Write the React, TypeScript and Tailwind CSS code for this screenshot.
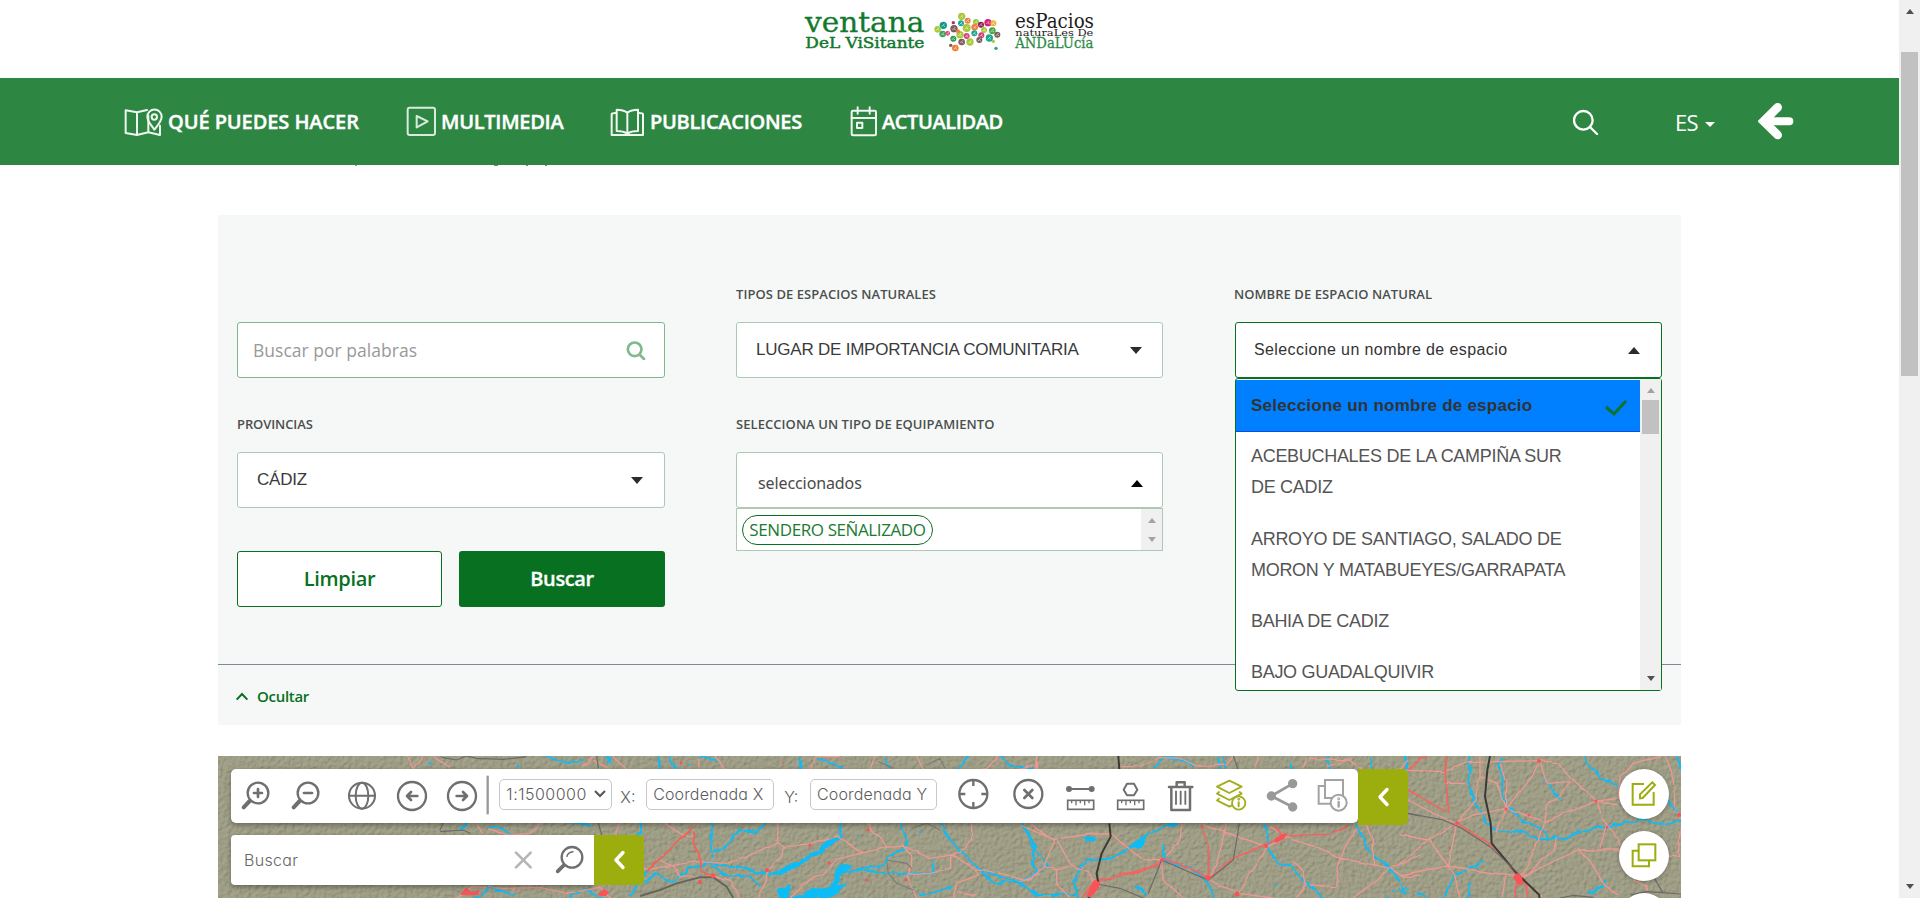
import React from "react";

const river = "#0fbcf5";

function Logo() {
  const dots: [number, number, number, string][] = [
    [545, 49, 11, "#a8c83c"], [490, 76, 11, "#0f9a86"], [473, 88, 10, "#a8c83c"], [520, 68, 5, "#b0306a"],
    [543, 70, 9, "#1aa58c"], [563, 62, 9, "#f08040"], [588, 66, 9, "#9ac43c"], [522, 86, 11, "#7a5c58"],
    [488, 102, 10, "#3aa55a"], [503, 100, 7, "#d83a6a"], [560, 84, 12, "#a8c83c"], [584, 82, 10, "#ef7d3c"],
    [603, 74, 9, "#8a2050"], [624, 68, 11, "#d8207a"], [640, 70, 9, "#f0b040"], [612, 90, 9, "#a8c83c"],
    [637, 92, 10, "#4aa84a"], [652, 104, 9, "#7a6058"], [628, 114, 11, "#18a890"], [604, 106, 9, "#d83a7a"],
    [583, 100, 9, "#18a890"], [540, 104, 11, "#a8c83c"], [560, 108, 9, "#d84080"], [520, 116, 9, "#2c9a50"],
    [545, 126, 10, "#7a5c58"], [570, 126, 11, "#a8c83c"], [598, 120, 9, "#7a5c58"], [526, 144, 10, "#f08030"],
    [512, 136, 5, "#7a5c58"], [640, 124, 5, "#a8c83c"], [648, 145, 5, "#18a890"], [534, 94, 6, "#ef7d3c"],
  ];
  return (
    <svg width="300" height="66" viewBox="60 0 900 198" className="block overflow-visible">
      <g fontFamily="'DejaVu Serif', serif">
        <text x="75" y="97" fontSize="84" fill="#13792e" stroke="#13792e" strokeWidth="1" textLength="358" lengthAdjust="spacingAndGlyphs">ventana</text>
        <text x="76" y="144" fontSize="43" fill="#13792e" stroke="#13792e" strokeWidth="1.4" textLength="357" lengthAdjust="spacingAndGlyphs">DeL ViSitante</text>
        <text x="705" y="83" fontSize="60" fill="#1c1c1c" textLength="237" lengthAdjust="spacingAndGlyphs">esPacios</text>
        <text x="706" y="109" fontSize="29" fill="#222" textLength="234" lengthAdjust="spacingAndGlyphs">naturaLes De</text>
        <text x="706" y="143" fontSize="42" fill="#2b8a45" stroke="#2b8a45" strokeWidth="0.8" textLength="234" lengthAdjust="spacingAndGlyphs">ANDaLUcía</text>
      </g>
      {dots.map(([x, y, r, c], i) => (
        <g key={i}>
          <circle cx={x} cy={y} r={r} fill={c} />
          {r > 6 && <path d={`M${x - 5} ${y + 4} L${x + 4} ${y - 5} M${x} ${y} l5 4`} stroke="#fff" strokeWidth="2.5" opacity=".7" />}
        </g>
      ))}
    </svg>
  );
}

function Icon({ x, w, y = 87, h = 162, children }: { x: number; w: number; y?: number; h?: number; children: React.ReactNode }) {
  return (
    <svg width={w / 3} height={h / 3} viewBox={`${x} ${y} ${w} ${h}`} className="block shrink-0" fill="none" stroke="#6f6f6f" strokeWidth="7" strokeLinecap="round" strokeLinejoin="round">
      {children}
    </svg>
  );
}

function NavText({ children, className }: { children: React.ReactNode; className: string }) {
  return <span className={"whitespace-nowrap text-[20px] leading-[28px] font-semibold text-white [-webkit-text-stroke:0.4px_white] " + className}>{children}</span>;
}

function Header() {
  return (
    <>
      <div className="flex h-[78px] w-[1899px] justify-start pl-[800px]"><Logo /></div>
      <div className="flex h-[87px] w-[1899px] items-center bg-[#2e8643] pl-[124px]">
        <div className="flex w-[282px] items-center">
          <Icon x={72} w={123} y={84} h={90}>
            <g stroke="#eef6f0" strokeWidth="6">
              <path d="M77 94 L111 100 L141 93 M77 94 V162 L111 168 L145 160 L180 168 V140 M111 100 V168 M145 110 V160" />
              <path d="M163 152 C152 136 142 126 142 113 A21 21 0 0 1 185 113 C185 126 174 138 163 152 Z" />
              <circle cx="163" cy="114" r="8" />
            </g>
          </Icon>
          <NavText className="ml-[3px] tracking-[-0.08px]">QUÉ PUEDES HACER</NavText>
        </div>
        <div className="flex w-[204px] items-center">
          <Icon x={918} w={93} y={84} h={93}>
            <g stroke="#d9ebdd" strokeWidth="6"><rect x="923" y="89" width="82" height="82" rx="6" /><path d="M950 114 L983 130 L950 148 Z" /></g>
          </Icon>
          <NavText className="ml-[4px] tracking-[-0.28px]">MULTIMEDIA</NavText>
        </div>
        <div className="flex w-[240px] items-center">
          <Icon x={90} w={108} y={84} h={90}>
            <g stroke="#f0f7f1" strokeWidth="6">
              <path d="M110 92 Q130 92 142 101 Q154 92 174 92 V156 Q154 156 142 164 Q130 156 110 156 Z M142 101 V164" />
              <path d="M108 102 Q95 102 95 106 V168 H189 V106 Q189 102 176 102" />
            </g>
          </Icon>
          <NavText className="ml-[4px] tracking-[-0.28px]">PUBLICACIONES</NavText>
        </div>
        <div className="flex w-[723px] items-center">
          <Icon x={810} w={84} y={80} h={99}>
            <g stroke="#f0f7f1" strokeWidth="6"><rect x="815" y="97" width="73" height="74" rx="4" /><path d="M815 119 H888 M833 87 V106 M869 87 V106" /><rect x="831" y="133" width="16" height="16" /></g>
          </Icon>
          <NavText className="ml-[4px] tracking-[-0.4px]">ACTUALIDAD</NavText>
        </div>
        <Icon x={219} w={78} y={114} h={78}>
          <g stroke="#fff" strokeWidth="7"><circle cx="250" cy="148" r="28" /><path d="M270 168 L291 189" /></g>
        </Icon>
        <span className="ml-[76px] w-[25px] text-[22px] leading-[28px] tracking-[-0.7px] text-white">ES</span>
        <span className="ml-[5px] mt-[5px] border-x-[5px] border-t-[5px] border-x-transparent border-t-white" />
        <span className="ml-[43px] mb-[2px]">
          <Icon x={774} w={110} y={96} h={114}>
            <path d="M833 112 L791 154 L833 195" stroke="#fff" strokeWidth="26" strokeLinejoin="miter" />
            <path d="M808 154 H868" stroke="#fff" strokeWidth="24" />
            <path d="M778 154 L800 132 V176 Z" fill="#fff" stroke="none" />
          </Icon>
        </span>
      </div>
      <div className="flex h-[50px] items-start pl-[355px]">
        <i className="h-px w-[2px] bg-[#7aa]" /><i className="ml-[137px] h-px w-[4px] bg-[#787]" /><i className="ml-[28px] h-px w-[2px] bg-[#787]" /><i className="ml-[17px] h-px w-[2px] bg-[#787]" />
      </div>
    </>
  );
}

function Label({ children, className = "tracking-[0.06px]" }: { children?: React.ReactNode; className?: string }) {
  return <div className={"mb-[19px] h-[18px] whitespace-nowrap text-[13px] leading-[18px] font-semibold text-[#4b4f4d] " + className}>{children}</div>;
}

const Down = ({ c = "border-t-[#2b2b2b]" }: { c?: string }) => <span className={"border-x-[6px] border-t-[7px] border-x-transparent " + c} />;
const Up = ({ c = "border-b-[#2b2b2b]" }: { c?: string }) => <span className={"border-x-[6px] border-b-[7px] border-x-transparent " + c} />;

const selectBox = "flex h-[56px] w-full shrink-0 items-center justify-between rounded-[3px] border bg-white ";
const arial = "font-['Liberation_Sans',Arial,sans-serif] ";

function Dropdown() {
  const item = "pl-[15px] py-[10px] leading-[31.25px]";
  return (
    <div className="absolute top-[56px] left-0 z-10 flex h-[313px] w-full rounded-[3px] border border-[#087021] bg-white">
      <div className={arial + "w-[404px] overflow-hidden text-[18px] text-[#555]"}>
        <div className="mt-px flex h-[52px] items-center justify-between border-b border-[#0a50e0] bg-[#007fff] pr-[12px] pl-[15px] font-bold text-[#333]">
          <span className="mt-px whitespace-nowrap text-[17px] tracking-[0.24px]">Seleccione un nombre de espacio</span>
          <svg width="24" height="18" viewBox="0 0 24 18" fill="none" stroke="#0a7325" strokeWidth="3" className="mt-[5px]"><path d="M2 8 L10 15 L22 2" /></svg>
        </div>
        <div className="tracking-[-0.3px]">
          <div className="pt-[9px] pb-[10px] pl-[15px] leading-[31.25px]">ACEBUCHALES DE LA CAMPIÑA SUR<br />DE CADIZ</div>
          <div className={item}><span className="whitespace-nowrap">ARROYO DE SANTIAGO, SALADO DE</span><br /><span className="whitespace-nowrap">MORON Y MATABUEYES/GARRAPATA</span></div>
          <div className={item}>BAHIA DE CADIZ</div>
          <div className={item}>BAJO GUADALQUIVIR</div>
        </div>
      </div>
      <div className="flex flex-1 flex-col items-center bg-[#f0f0f0] pt-[9px] pb-[9px]">
        <span className="border-x-[4.5px] border-b-[5px] border-x-transparent border-b-[#a3a3a3]" />
        <span className="mt-[7px] h-[34px] w-[17px] bg-[#c1c1c1]" />
        <span className="mt-auto border-x-[4.5px] border-t-[5px] border-x-transparent border-t-[#505050]" />
      </div>
    </div>
  );
}

function SearchForm() {
  return (
    <section className="ml-[218px] h-[510px] w-[1463px] bg-[#f6f8f7]">
      <div className="flex h-[450px] border-b border-[#7f8894] pt-[70px] pl-[19px]">
        <div className="mr-[71px] flex w-[428px] flex-col">
          <Label />
          <div className={selectBox + "border-[#7fb890] pr-[18px] pl-[15px]"}>
            <span className="text-[17.5px] tracking-[0.02px] text-[#999]">Buscar por palabras</span>
            <Icon x={1249} w={60} y={422} h={60}><g stroke="#80b890" strokeWidth="8"><circle cx="1275" cy="450" r="20.5" /><path d="M1291 467 L1303 479" /></g></Icon>
          </div>
          <div className="h-[37px]" />
          <Label className="tracking-[-0.1px]">PROVINCIAS</Label>
          <div className={selectBox + "border-[#adc9b6] pr-[21px] pl-[19px]"}>
            <span className={arial + "mb-[1px] text-[17px] tracking-[-0.2px] text-[#3a3a3a]"}>CÁDIZ</span><Down />
          </div>
          <div className="mt-[43px] flex h-[56px] gap-[17px] text-[20px] font-semibold">
            <div className="flex w-[205px] items-center justify-center rounded-[3px] border border-[#087021] bg-white tracking-[-0.3px] text-[#087021]">Limpiar</div>
            <div className="flex w-[206px] items-center justify-center rounded-[3px] bg-[#087021] tracking-[-0.4px] text-white [-webkit-text-stroke:0.3px_white]">Buscar</div>
          </div>
        </div>
        <div className="mr-[72px] flex w-[427px] flex-col">
          <Label>TIPOS DE ESPACIOS NATURALES</Label>
          <div className={selectBox + "border-[#adc9b6] pr-[20px] pl-[19px]"}>
            <span className={arial + "text-[17px] tracking-[-0.22px] text-[#3a3a3a]"}>LUGAR DE IMPORTANCIA COMUNITARIA</span><Down />
          </div>
          <div className="h-[37px]" />
          <Label>SELECCIONA UN TIPO DE EQUIPAMIENTO</Label>
          <div className={selectBox + "border-[#adc9b6] pr-[19px] pl-[21px]"}>
            <span className="mt-[5px] font-['Noto_Sans',sans-serif] text-[16px] tracking-[-0.1px] text-[#4a4a4a]">seleccionados</span>
            <span className="mt-[6px] flex"><Up c="border-b-black" /></span>
          </div>
          <div className="flex h-[43px] justify-between border border-[#adc9b6] bg-white">
            <span className="mt-[6px] ml-[5px] flex h-[30px] w-[191px] items-center justify-center rounded-full border border-[#087021] pb-px text-[17px] tracking-[-0.4px] whitespace-nowrap text-[#1a7b32]">SENDERO SEÑALIZADO</span>
            <span className="flex w-[21px] flex-col items-center justify-between bg-[#f0f0f0] pt-[9px] pb-[8px]">
              <span className="border-x-[4.5px] border-b-[5px] border-x-transparent border-b-[#a3a3a3]" />
              <span className="border-x-[4.5px] border-t-[5px] border-x-transparent border-t-[#a3a3a3]" />
            </span>
          </div>
        </div>
        <div className="flex w-[427px] flex-col">
          <Label className="-ml-px tracking-[0.06px]">NOMBRE DE ESPACIO NATURAL</Label>
          <div className="relative">
            <div className={selectBox + "border-[#087021] pr-[21px] pl-[18px]"}>
              <span className={arial + "text-[16px] tracking-[0.4px] text-[#333]"}>Seleccione un nombre de espacio</span>
              <Up />
            </div>
            <Dropdown />
          </div>
        </div>
      </div>
      <div className="flex h-[60px] items-center pt-[2px] pl-[17px] text-[#087021]">
        <Icon x={74} w={42} y={120} h={36}><path d="M79 149 L95 132 L111 149" stroke="#087021" strokeWidth="6" strokeLinecap="butt" strokeLinejoin="miter" /></Icon>
        <span className="ml-[8px] text-[15px] font-semibold tracking-[-0.3px]">Ocultar</span>
      </div>
    </section>
  );
}

function Terrain() {
  return (
    <svg className="absolute inset-0" width="1463" height="142" viewBox="0 0 1463 142">
      <defs>
        <filter id="relief" x="0" y="0" width="100%" height="100%">
          <feTurbulence type="fractalNoise" baseFrequency="0.25" numOctaves="4" seed="7" result="n" />
          <feDiffuseLighting in="n" surfaceScale="1.4" diffuseConstant="1.14" lightingColor="#a4a38b"><feDistantLight azimuth="225" elevation="60" /></feDiffuseLighting>
        </filter>
        <filter id="rough" x="-5%" y="-20%" width="110%" height="140%">
          <feTurbulence type="fractalNoise" baseFrequency="0.09" numOctaves="3" seed="3" />
          <feDisplacementMap in="SourceGraphic" scale="7" xChannelSelector="R" yChannelSelector="G" />
        </filter>
        <filter id="bend" x="-5%" y="-20%" width="110%" height="140%">
          <feTurbulence type="fractalNoise" baseFrequency="0.05" numOctaves="2" seed="9" />
          <feDisplacementMap in="SourceGraphic" scale="4" xChannelSelector="R" yChannelSelector="G" />
        </filter>
      </defs>
      <rect width="1463" height="142" fill="#98977f" />
      <rect width="1463" height="142" filter="url(#relief)" opacity=".65" />
      <g filter="url(#rough)" fill="none" stroke={river} strokeWidth="6">
        <g transform="translate(-8 -106) scale(.33333)">
          <path d="M1005 318 L1040 330 L1120 334 M1190 318 L1200 340 M770 515 L750 545 M838 528 L880 540 L905 555 M1060 515 L1145 528 M1290 500 L1290 550 L1250 580 M800 744 L840 712 L910 738 M1080 744 L1120 714 L1180 744 M1260 744 L1290 690 L1320 660" />
        </g>
        <g transform="translate(422 -16) scale(.33333)">
          <path d="M55 48 L60 90 M90 48 L108 90 M175 55 L235 60 M475 60 L480 90 M535 55 L610 85 M735 55 L755 90 M988 48 L950 90 M1080 50 L1100 75 L1190 90" />
          <path d="M215 250 L212 320 L218 355 M375 250 L350 280 L300 268 L255 320 L225 340" />
          <path d="M10 430 L50 400 L100 430 L150 385 L200 372 L300 380 L380 402 M215 380 L260 405 L330 410 L360 440" />
          <path d="M780 250 L800 300 L795 330 L745 345 L730 375 L640 390 L600 400" />
          <path d="M905 250 L925 290 L970 340 L1020 390 L1060 405 L1140 425 L1190 400 L1220 370 L1180 320 L1150 250 M1030 400 L1060 430 L1130 425 L1190 460 M880 355 V395 L800 405 L720 395 L640 390 M840 470 L890 455 L940 440" />
          <path d="M600 250 L605 290 L570 300 L530 330 L490 360 L460 375 L385 405 L440 398 L490 365 L530 345 L600 290 Z M600 375 L630 380 L600 400 L590 440 L610 435 L580 474 L460 474 L520 450 L580 440 Z M420 445 L450 440 L445 474 L420 470 Z" fill={river} />
        </g>
        <g transform="translate(802 -16) scale(.33333)">
          <path d="M470 250 L420 262 L370 290 L320 330 L270 355 L200 365 L165 400 L170 474 M10 255 L50 320 L35 370 L50 400 L0 430 L45 465 L170 465 M430 315 L430 360 L510 385 L565 420 L578 474 M735 250 L745 325 L770 365 L810 380 L850 420 L910 470 M1010 250 L1050 340 L1110 385 L1140 425 M405 85 L430 50 L480 55 L520 80 M590 50 L600 85 M610 48 L615 80 M810 70 L815 87 M0 80 L30 85 M925 50 L930 85 M1050 50 L1055 90 M1160 50 V87 M350 435 L375 465" />
          <path d="M375 290 L365 320 L335 325 Z M195 292 L225 300 L200 305 Z" fill={river} />
        </g>
        <g transform="translate(1182 -16) scale(.33333)">
          <path d="M18 50 L20 85 M212 48 L205 130 L225 190 L255 245 L300 272 L360 275 L420 298 L490 292 L560 270 L620 258 L720 240 L780 252 L843 245 M312 55 L295 70 L318 200 L370 245 L430 265 L445 290 M430 120 L455 145 L480 175 M553 50 L600 115 L655 135 M830 50 L843 85 M800 175 L843 230 M255 365 L210 385 L165 410 L130 470 M215 425 L200 470 M560 458 L615 440 V420 M0 430 L20 460 M50 460 L80 470" />
        </g>
      </g>
      <g filter="url(#bend)" fill="none" stroke="#ee9891" strokeWidth="4">
        <g transform="translate(-8 -106) scale(.33333)">
          <path d="M590 318 L608 355 L640 320 M670 320 L720 355 M1150 318 L1120 350 M1150 330 L1190 350 M1210 320 L1250 355 M820 555 L800 520 M835 540 L900 555 L960 550 L998 518 M1228 519 L1215 560 M740 744 L790 710 L880 715 L990 712 L1070 730 L1170 712 L1200 744 M1300 660 L1320 660" />
        </g>
        <g transform="translate(422 -16) scale(.33333)">
          <path d="M178 48 L180 90 M225 48 L255 90 M525 48 L515 90 M525 50 L630 50 M705 48 L690 90 M830 48 L850 90 M1075 48 L1040 85 L1020 90 M1190 50 V90" />
          <path d="M0 395 L60 382 L170 365 L260 370 L310 355 L415 305 L430 320 L510 315 L590 288 L670 338 L740 322 L790 318 L870 355 L940 345 L1000 385 L1080 400 L1150 420 L1200 400" />
          <path d="M415 250 L412 305 M430 320 L425 350 L380 390 L380 420 L355 474 M685 250 L690 270 L720 290 L740 322 M670 338 L590 358 L550 405 L520 410 L450 474 M790 318 L815 350 L815 380 L800 415 L830 474 M995 250 L995 300 L975 325 L935 345 L935 385 L870 400 L805 405 M1000 385 L1015 405 L950 430 L940 474 M950 455 L1010 465 M75 250 L120 280 L165 290 M60 362 L100 380 L120 410 L180 412 L210 405 L270 425 L300 474" />
          <path d="M165 260 L120 295 L85 330 L45 370 L20 395 M165 275 L160 310 L178 345 L180 390 L220 405" stroke="#fa5c55" strokeWidth="5" />
        </g>
        <g transform="translate(802 -16) scale(.33333)">
          <path d="M50 48 L45 90 M300 80 L360 80 L420 52 L480 55 L530 80 L620 75 L640 48 M0 85 L40 75 M700 85 L715 48 M850 85 L860 55 L990 60 L1030 90 M920 80 L1000 55" />
          <path d="M0 255 L100 298 L190 285 L275 280 L310 315 L365 355 L425 360 M35 250 L80 290 M105 298 L75 380 L30 415 L0 425 M110 298 L150 375 L205 395 L225 430 M75 380 L110 390 L145 380 M110 390 V430 L150 470 M485 250 L480 300 L440 350 M425 370 L430 420 L490 474 M620 250 L600 330 L590 370 L565 415 M550 255 L740 320 L810 290 M740 325 L700 390 L650 465 M565 420 L600 440 L655 460 L760 474 M750 260 L820 300 L900 325 L950 352 L1110 385 L1200 345 M1010 265 L975 320 L955 380 L950 440 L870 435 M1040 250 L1060 300 L1060 380 M1110 385 L1070 420 L1000 474 M1110 385 L1150 410 L1200 405 M820 365 L850 395 L860 430 L830 474" />
          <path d="M190 474 L225 430 L300 405 L370 395 L430 360 L500 378 L565 415 L640 355 L720 320 L800 288 L930 282 L985 255 M230 425 L420 375 M545 255 L565 310 L565 415 M765 260 L790 288" stroke="#f6625e" strokeWidth="5" />
        </g>
        <g transform="translate(1182 -16) scale(.33333)">
          <path d="M0 90 L135 95 L200 68 L290 65 L420 62 L475 68 L510 110 L590 183 L655 175 M240 48 L240 110 L225 180 L170 250 M240 110 L290 130 L320 205 L400 100 L420 60 M320 205 L420 240 L430 245 L590 183 M300 70 L320 120 L320 205 L290 280 M420 65 L440 130 L510 125 L475 175 L440 190 L430 250 L415 300 L380 380 L355 410 M510 125 L475 175 M590 183 L610 240 L655 300 L660 320 M620 250 L600 325 M355 410 L440 375 L535 330 L655 330 M535 330 L570 360 L615 440 L655 465 M470 290 L460 330 L370 410 M24 180 L100 220 L170 250 L220 225 L320 205 M0 285 L85 300 L170 250 M85 300 L145 378 L165 410 L180 474 M85 300 L0 370 M0 405 L145 378 L350 410 M170 250 L145 378 M320 410 L310 470 M20 60 L0 90 M140 130 L195 130 M600 185 L655 195 M660 110 L700 70 L740 60 L800 45 M655 175 L660 110 M795 50 L820 120 L825 200 L843 240 L835 340 L843 350 M700 420 L740 440 L745 474 M805 345 L843 350 M380 440 L430 470" />
          <path d="M138 48 L143 215 L24 150 M24 90 L60 55 L90 48 M170 250 L280 320 L355 410 L345 474 M355 410 L380 440 V474" stroke="#f6625e" strokeWidth="5" />
        </g>
      </g>
      <g fill="none" stroke="#6b6a68" strokeWidth="3.5">
        <g transform="translate(-8 -106) scale(.33333)"><path d="M695 322 L740 330 L770 318 L800 325 L880 328 L950 320 M690 545 L760 540 L780 550 M700 519 L690 540 M1160 318 L1165 355 M1165 519 L1175 555" /></g>
        <g transform="translate(422 -16) scale(.33333)">
          <path d="M0 468 L60 450 L110 430 L180 412 L220 412 L260 440 L280 474" strokeWidth="6" stroke="#66665c" />
          <path d="M740 360 L800 370 L815 385 M740 365 L745 400 L770 430 L820 450 M715 65 L760 85 M860 75 L900 55 L915 85 M815 265 L860 250 L900 270" stroke="#7c7d75" />
        </g>
        <g transform="translate(802 -16) scale(.33333)">
          <path d="M295 48 L298 90 M268 250 L272 290 L245 340 L230 400 L235 430 L205 474" strokeWidth="6" stroke="#3a3936" />
          <path d="M640 48 L655 90 M658 250 L640 360 L565 420 L540 410 L425 360 L385 460 M230 432 L300 445 L370 474 M1165 220 L1200 228" />
        </g>
        <g transform="translate(1182 -16) scale(.33333)">
          <path d="M270 48 L262 90 L255 170 L272 250 L275 310 L350 400 L418 465 V474" strokeWidth="6" stroke="#3a3936" />
          <path d="M24 220 L130 240 L185 265 L270 320 L355 400 M480 474 L520 466 L580 472 M690 465 L740 455 L843 462 M760 410 L790 460" />
        </g>
      </g>
      <g fill="#fa5257">
        <path d="M242 138 l6 -6 l6 4 l8 -2 l-2 4 l4 1 h-20 Z M380 138 l6 -5 l5 3 l-3 4 h-6 Z M872 132 l4 -8 l6 2 l-1 6 l-8 9 h-5 Z M1056 84 l6 -5 l7 -2 l-3 6 l-8 4 Z M1295 121 l4 -4 l5 3 l1 8 l-5 1 Z" />
        <circle cx="495" cy="120" r="2.3" /><circle cx="482" cy="126" r="2" /><circle cx="549" cy="114" r="2" />
        <circle cx="565" cy="7" r="1.2" opacity=".7" /><circle cx="463" cy="7" r="1.5" /><circle cx="592" cy="89" r="1.6" /><circle cx="611" cy="107" r="1.6" /><circle cx="650" cy="74" r="1.6" /><circle cx="649" cy="124" r="1.6" />
        <circle cx="688" cy="124" r="1.6" /><circle cx="990" cy="122" r="2.8" /><circle cx="1048" cy="90" r="2" /><circle cx="944" cy="104" r="2" /><circle cx="1019" cy="138" r="2.4" />
        <circle cx="1239" cy="67" r="2" /><circle cx="1321" cy="5" r="2" /><circle cx="1288" cy="53" r="1.5" /><circle cx="1311" cy="59" r="1.5" /><circle cx="1378" cy="45" r="1.6" /><circle cx="1389" cy="71" r="1.5" /><circle cx="1461" cy="59" r="2" />
      </g>
      <g fill={river}><circle cx="212" cy="7" r="1.5" /><circle cx="300" cy="10" r="1.5" /><circle cx="471" cy="9" r="1" /><circle cx="640" cy="81" r="1" /><circle cx="703" cy="76" r="1.2" /><circle cx="1058" cy="129" r="1.2" /><path d="M1174 134l3 2m4-4l2 5m4-6l3 3m-22 5l2 3" stroke={river} strokeWidth="1.3" /></g>
    </svg>
  );
}

const muli = "font-['Inter',sans-serif] [font-feature-settings:'cv11'] ";
const field = "flex shrink-0 items-center rounded-[5px] border border-[#c8c8c8] whitespace-nowrap mb-[4px] ";
const Chevron = () => (
  <svg width="14" height="20" viewBox="0 0 14 20" fill="none" stroke="#fff" strokeWidth="3.4" strokeLinejoin="round" strokeLinecap="round"><path d="M11 2.5 L4 10 L11 17.5" /></svg>
);

function Toolbar() {
  return (
    <div className="flex items-start">
      <div className={muli + "flex h-[54px] w-[1127px] items-center rounded-[5px] bg-white text-[16px] text-[#5c5c5c] shadow-[0_2px_5px_rgba(0,0,0,0.35)]"}>
        <Icon x={63} w={150} y={357}><circle cx="144" cy="429" r="31" /><path d="M132 429 H156 M144 417 V441" strokeWidth="8" /><path d="M119 453 L101 472" strokeWidth="12" /></Icon>
        <Icon x={213} w={150} y={357}><circle cx="294" cy="429" r="31" /><path d="M282 429 H306" strokeWidth="8" /><path d="M269 453 L251 472" strokeWidth="12" /></Icon>
        <Icon x={363} w={168} y={357}><g strokeWidth="6"><circle cx="456" cy="437" r="39" /><ellipse cx="456" cy="437" rx="19" ry="39" /><path d="M417 437 H495" /></g></Icon>
        <Icon x={531} w={150} y={357}><circle cx="606" cy="438" r="42" /><path d="M622 438 H592 M603 426 L591 438 L603 450" strokeWidth="8" /></Icon>
        <Icon x={681} w={139} y={357}><circle cx="756" cy="438" r="42" /><path d="M740 438 H770 M759 426 L771 438 L759 450" strokeWidth="8" /></Icon>
        <Icon x={820} w={48} y={357}><path d="M834 377 V493" stroke="#999" strokeLinecap="butt" /></Icon>
        <div className={field + "h-[31px] w-[113px] pl-[6px]"}>
          <span className="w-[84px] text-[16px] font-light tracking-[0.5px]">1:1500000</span>
          <svg width="12" height="8" viewBox="0 0 12 8" fill="none" stroke="#555" strokeWidth="2" className="ml-[4px]"><path d="M1 1 L6 6 L11 1" /></svg>
        </div>
        <span className="mt-[2px] ml-[8px] w-[26px] font-light">X:</span>
        <div className={field + "h-[31px] w-[128px] pl-[6px] font-light tracking-[0.15px]"}>Coordenada X</div>
        <span className="mt-[2px] ml-[10px] w-[26px] font-light">Y:</span>
        <div className={field + "h-[31px] w-[127px] pl-[6px] font-light tracking-[0.15px]"}>Coordenada Y</div>
        <Icon x={-249} w={189}><circle cx="-140" cy="162" r="42" /><path d="M-140 122 V138 M-140 186 V202 M-180 162 H-164 M-116 162 H-100" strokeLinecap="butt" /></Icon>
        <Icon x={-60} w={165}><circle cx="25" cy="162" r="42" /><path d="M13 150 L37 174 M37 150 L13 174" strokeWidth="8" /></Icon>
        <Icon x={105} w={150}><path d="M148 147 H214" strokeWidth="6" /><circle cx="147" cy="147" r="5.5" fill="#6f6f6f" /><circle cx="215" cy="147" r="5.5" fill="#6f6f6f" /><rect x="143" y="181" width="78" height="27" strokeWidth="5" strokeLinejoin="miter" /><path d="M155 183 V190 M168 183 V196 M181 183 V190 M194 183 V196 M207 183 V190" strokeWidth="4" strokeLinecap="butt" /></Icon>
        <Icon x={255} w={150}><path d="M321 131 H342 L352 149 L342 166 H321 L311 149 Z" strokeWidth="6" /><rect x="293" y="181" width="78" height="27" strokeWidth="5" strokeLinejoin="miter" /><path d="M305 183 V190 M318 183 V196 M331 183 V190 M344 183 V196 M357 183 V190" strokeWidth="4" strokeLinecap="butt" /></Icon>
        <Icon x={405} w={150}><path d="M447 141 H517 M454 143 V210 H510 V143 M470 139 V127 H494 V139" strokeWidth="7.5" /><path d="M468 152 V194 M482 152 V194 M496 152 V194" strokeWidth="5.5" strokeLinecap="butt" /></Icon>
        <Icon x={555} w={153}>
          <g stroke="#a0ae20" strokeWidth="5.5"><path d="M628 122 L665 140 L628 159 L591 140 Z M597 156 L591 161 L628 180 L665 161 L659 156 M597 176 L591 181 L628 200 L636 196" /><circle cx="656" cy="189" r="20" fill="#fff" /><path d="M656 187 V199" strokeWidth="6" /><circle cx="656" cy="178" r="1.5" /></g>
        </Icon>
        <Icon x={708} w={154}><g stroke="#999"><path d="M754 168 L818 131 M754 168 L818 201" strokeWidth="8" /><circle cx="754" cy="168" r="10.5" fill="#999" /><circle cx="818" cy="131" r="10.5" fill="#999" /><circle cx="818" cy="201" r="10.5" fill="#999" /></g></Icon>
        <Icon x={862} w={152}><g stroke="#a3a3a3" strokeWidth="6" strokeLinejoin="miter"><path d="M914 138 H897 V191 H932" /><rect x="916" y="120" width="54" height="54" /><circle cx="957" cy="188" r="24" fill="#fff" /><path d="M957 186 V200" strokeWidth="7" /><circle cx="957" cy="176" r="1.5" /></g></Icon>
      </div>
      <div className="flex h-[56px] w-[50px] items-center justify-center rounded-r-[5px] bg-[#9cad0e]"><Chevron /></div>
    </div>
  );
}

function MapView() {
  const fab = "flex size-[50px] shrink-0 items-center justify-center rounded-full bg-white shadow-[0_1px_4px_rgba(0,0,0,0.3)]";
  return (
    <section className="relative mt-[31px] ml-[218px] h-[142px] w-[1463px] overflow-hidden">
      <Terrain />
      <div className="relative flex items-start justify-between pt-[13px] pr-[12px] pl-[13px]">
        <div className="flex flex-col gap-[10px]">
          <Toolbar />
          <div className="flex h-[50px] w-[413px]">
            <div className={muli + "flex h-[50px] w-[363px] items-center rounded-l-[4px] bg-white pl-[13px] text-[16px] font-light text-[#666] shadow-[0_2px_5px_rgba(0,0,0,0.35)]"}>
              <span className="flex-1 tracking-[0.3px]">Buscar</span>
              <Icon x={900} w={80} y={555} h={150}><path d="M918 608 L962 652 M962 608 L918 652" stroke="#b5b5b5" strokeWidth="8" /></Icon>
              <Icon x={980} w={172} y={555} h={150}><circle cx="1085" cy="622" r="31" /><path d="M1070 619 Q1072 607 1088 605" strokeWidth="4.5" /><path d="M1060 646 L1042 664" strokeWidth="11" /></Icon>
            </div>
            <div className="flex w-[50px] items-center justify-center rounded-r-[5px] bg-[#9cad0e]"><Chevron /></div>
          </div>
        </div>
        <div className="flex h-[129px] flex-col gap-[12px]">
          <div className={fab}><Icon x={693} w={78} y={123} h={78}><g stroke="#9cad0e" strokeWidth="6" strokeLinecap="butt" strokeLinejoin="miter"><path d="M732 132 H698 V194 H761 V156" /><path d="M720 175 V163 L757 127 L765 135 L728 174 Z" /></g></Icon></div>
          <div className={fab}><Icon x={693} w={78} y={309} h={78}><g stroke="#9cad0e" strokeWidth="6" strokeLinejoin="miter"><path d="M715 332 H698 V379 H747 V363" /><rect x="716" y="313" width="50" height="48" /></g></Icon></div>
          <div className={fab} />
        </div>
      </div>
    </section>
  );
}

export default function App() {
  return (
    <div className="flex h-[898px] w-[1920px] overflow-hidden bg-white font-['Open_Sans',sans-serif]">
      <main className="w-[1899px] shrink-0">
        <Header />
        <SearchForm />
        <MapView />
      </main>
      <aside className="flex w-[21px] flex-col items-center bg-[#f0f0f0] pt-[9px] pb-[9px]">
        <span className="border-x-[4.5px] border-b-[5px] border-x-transparent border-b-[#505050]" />
        <span className="mt-[38px] h-[324px] w-[17px] bg-[#c1c1c1]" />
        <span className="mt-auto border-x-[4.5px] border-t-[5px] border-x-transparent border-t-[#505050]" />
      </aside>
    </div>
  );
}
